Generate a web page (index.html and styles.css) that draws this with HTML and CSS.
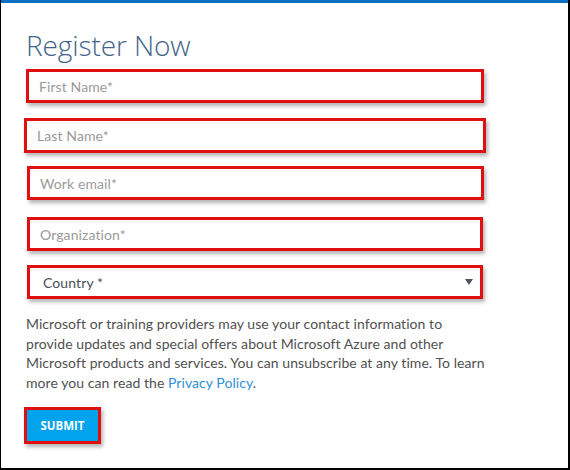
FILE: index.html
```html
<!DOCTYPE html>
<html lang="en">
<head>
<meta charset="utf-8">
<title>Register Now</title>
<link rel="stylesheet" href="styles.css">
</head>
<body>
<div class="frame">
  <div class="topbar"></div>
  <main class="content">
    <h1 class="title">Register Now</h1>
    <form class="form">
      <div class="field f1"><input class="input" type="text" placeholder="First Name*"></div>
      <div class="field f2"><input class="input" type="text" placeholder="Last Name*"></div>
      <div class="field f3"><input class="input" type="email" placeholder="Work email*"></div>
      <div class="field f4"><input class="input" type="text" placeholder="Organization*"></div>
      <div class="field f5 select">
        <span class="select-label">Country *</span>
        <svg class="arrow" width="8" height="6" viewBox="0 0 8 6"><path d="M0 0H8L4 6Z" fill="#4d5560"/></svg>
      </div>
      <p class="notice">Microsoft or training providers may use your contact information to<br>provide updates and special offers about Microsoft Azure and other<br>Microsoft products and services. You can unsubscribe at any time. To learn<br>more you can read the <a class="link" href="#">Privacy Policy</a>.</p>
      <div class="submit-wrap"><button class="submit" type="button">SUBMIT</button></div>
    </form>
  </main>
</div>
</body>
</html>
```

FILE: styles.css
```css
html, body {
  margin: 0;
  padding: 0;
  background: #ffffff;
}

.frame {
  box-sizing: border-box;
  width: 570px;
  height: 470px;
  border-left: 1px solid #000;
  border-right: 2px solid #000;
  border-bottom: 2px solid #000;
  display: flex;
  flex-direction: column;
  overflow: hidden;
}

.topbar {
  height: 3px;
  background: #0a6fc2;
  flex: none;
}

.content {
  padding: 0 0 0 25px;
  font-family: "Lato", "Open Sans", sans-serif;
}

.title {
  margin: 24px 0 0 0;
  font-family: "Open Sans", sans-serif;
  font-weight: 300;
  font-size: 28px;
  line-height: 36px;
  color: #43648b;
  letter-spacing: -0.1px;
}

.form {
  display: flex;
  flex-direction: column;
  margin-top: 6px;
}

.field {
  box-sizing: border-box;
  width: 458px;
  height: 34px;
  border: 3px solid #e01010;
  background: #fff;
  box-shadow: 2px 3px 4px rgba(0, 0, 0, 0.3);
  display: flex;
  align-items: center;
  margin-bottom: 15px;
}

.f2 { margin-left: -2px; width: 462px; height: 35px; margin-bottom: 13px; }
.f3 { margin-left: 1px; width: 457px; margin-bottom: 17px; }
.f4 { margin-left: 1px; width: 456px; margin-bottom: 14px; }
.f5 { margin-left: 1px; width: 456px; margin-bottom: 0; }

.input {
  border: none;
  outline: none;
  background: transparent;
  width: 100%;
  height: 100%;
  padding: 0 0 0 10px;
  font-family: "Lato", "Open Sans", sans-serif;
  font-size: 14px;
  letter-spacing: 0.1px;
  color: #444;
}

.input::placeholder {
  color: #9a9a9a;
  opacity: 1;
}

.select {
  justify-content: space-between;
  padding: 0 7px 0 13px;
}

.select-label {
  font-size: 14px;
  letter-spacing: 0.1px;
  color: #4a4f57;
}

.arrow {
  display: block;
}

.notice {
  margin: 15px 0 0 0;
  width: 500px;
  font-size: 14px;
  letter-spacing: 0.06px;
  line-height: 19.5px;
  color: #505050;
}

.link {
  color: #2e8fdc;
  text-decoration: none;
}

.submit-wrap {
  margin-top: 15px;
  margin-left: -2px;
}

.submit {
  box-sizing: border-box;
  width: 77px;
  height: 37px;
  border: 3px solid #e01010;
  background: #00a3ec;
  color: #fff;
  font-family: "Open Sans", sans-serif;
  font-weight: 700;
  font-size: 11.5px;
  padding: 0;
  box-shadow: 2px 3px 4px rgba(0, 0, 0, 0.3);
  cursor: pointer;
}
```
